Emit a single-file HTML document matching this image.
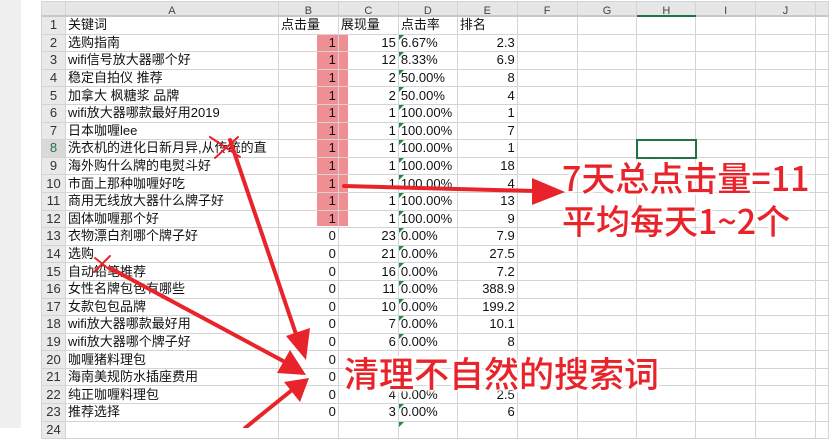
<!DOCTYPE html>
<html><head><meta charset="utf-8">
<style>
body{margin:0;width:829px;height:428px;overflow:hidden;background:#fff;font-family:"Liberation Sans","Noto Sans CJK SC",sans-serif;position:relative}
#lm{position:absolute;left:0;top:0;width:21px;height:428px;background:#f0f0f0}
#tb{position:absolute;left:41px;top:1px;border-collapse:collapse;table-layout:fixed;font-size:13px;color:#111}
#tb td{border:1px solid #d4d4d4;height:16.6px;padding:0 2px;white-space:nowrap;overflow:hidden;line-height:16px}
#tb tr.h td{background:#e6e6e6;color:#444;text-align:center;height:13px;font-size:11px;line-height:8px;vertical-align:bottom;border-bottom:2px solid #c8c8c8}
#tb td.n{background:#e9e9e9;text-align:center;color:#333;font-size:13px}
#tb td.r{text-align:right}
#tb td.d{position:relative}
#tb td.d:before{content:"";position:absolute;left:0;top:0;border-top:5px solid #1e8a3c;border-right:5px solid transparent}
.pk{position:absolute;left:317px;top:34px;width:31px;height:192px;background:#f08f93}
.ov{position:absolute;color:#e8232a;font-family:"Noto Sans CJK SC",sans-serif;font-weight:500;text-shadow:0 0 2px #fff,0 0 2px #fff,2px 2px 2px #fff,-2px -2px 2px #fff,2px -2px 2px #fff,-2px 2px 2px #fff;white-space:nowrap}
#sel{position:absolute;left:636px;top:139px;width:57px;height:16px;border:2px solid #217346}
</style></head><body>
<div id="lm"></div>
<div class="pk"></div>
<table id="tb">
<colgroup><col style="width:24px"><col style="width:213px"><col style="width:60px"><col style="width:60px"><col style="width:59px"><col style="width:60px"><col style="width:60px"><col style="width:60px"><col style="width:59px"><col style="width:60px"><col style="width:60px"><col style="width:13px"></colgroup>
<tr class="h"><td></td><td>A</td><td>B</td><td>C</td><td>D</td><td>E</td><td>F</td><td>G</td><td style="border-bottom:2px solid #217346">H</td><td>I</td><td>J</td><td></td></tr>
<tr><td class="n">1</td><td>关键词</td><td>点击量</td><td>展现量</td><td>点击率</td><td>排名</td><td></td><td></td><td></td><td></td><td></td><td></td></tr>
<tr><td class="n">2</td><td>选购指南</td><td class="r">1</td><td class="r">15</td><td class="d">6.67%</td><td class="r">2.3</td><td></td><td></td><td></td><td></td><td></td><td></td></tr>
<tr><td class="n">3</td><td>wifi信号放大器哪个好</td><td class="r">1</td><td class="r">12</td><td class="d">8.33%</td><td class="r">6.9</td><td></td><td></td><td></td><td></td><td></td><td></td></tr>
<tr><td class="n">4</td><td>稳定自拍仪 推荐</td><td class="r">1</td><td class="r">2</td><td class="d">50.00%</td><td class="r">8</td><td></td><td></td><td></td><td></td><td></td><td></td></tr>
<tr><td class="n">5</td><td>加拿大 枫糖浆 品牌</td><td class="r">1</td><td class="r">2</td><td class="d">50.00%</td><td class="r">4</td><td></td><td></td><td></td><td></td><td></td><td></td></tr>
<tr><td class="n">6</td><td>wifi放大器哪款最好用2019</td><td class="r">1</td><td class="r">1</td><td class="d">100.00%</td><td class="r">1</td><td></td><td></td><td></td><td></td><td></td><td></td></tr>
<tr><td class="n">7</td><td>日本咖喱lee</td><td class="r">1</td><td class="r">1</td><td class="d">100.00%</td><td class="r">7</td><td></td><td></td><td></td><td></td><td></td><td></td></tr>
<tr><td class="n" style="color:#217346;background:#d9d9d9">8</td><td>洗衣机的进化日新月异,从传统的直</td><td class="r">1</td><td class="r">1</td><td class="d">100.00%</td><td class="r">1</td><td></td><td></td><td></td><td></td><td></td><td></td></tr>
<tr><td class="n">9</td><td>海外购什么牌的电熨斗好</td><td class="r">1</td><td class="r">1</td><td class="d">100.00%</td><td class="r">18</td><td></td><td></td><td></td><td></td><td></td><td></td></tr>
<tr><td class="n">10</td><td>市面上那种咖喱好吃</td><td class="r">1</td><td class="r">1</td><td class="d">100.00%</td><td class="r">4</td><td></td><td></td><td></td><td></td><td></td><td></td></tr>
<tr><td class="n">11</td><td>商用无线放大器什么牌子好</td><td class="r">1</td><td class="r">1</td><td class="d">100.00%</td><td class="r">13</td><td></td><td></td><td></td><td></td><td></td><td></td></tr>
<tr><td class="n">12</td><td>固体咖喱那个好</td><td class="r">1</td><td class="r">1</td><td class="d">100.00%</td><td class="r">9</td><td></td><td></td><td></td><td></td><td></td><td></td></tr>
<tr><td class="n">13</td><td>衣物漂白剂哪个牌子好</td><td class="r">0</td><td class="r">23</td><td class="d">0.00%</td><td class="r">7.9</td><td></td><td></td><td></td><td></td><td></td><td></td></tr>
<tr><td class="n">14</td><td>选购</td><td class="r">0</td><td class="r">21</td><td class="d">0.00%</td><td class="r">27.5</td><td></td><td></td><td></td><td></td><td></td><td></td></tr>
<tr><td class="n">15</td><td>自动铅笔推荐</td><td class="r">0</td><td class="r">16</td><td class="d">0.00%</td><td class="r">7.2</td><td></td><td></td><td></td><td></td><td></td><td></td></tr>
<tr><td class="n">16</td><td>女性名牌包包有哪些</td><td class="r">0</td><td class="r">11</td><td class="d">0.00%</td><td class="r">388.9</td><td></td><td></td><td></td><td></td><td></td><td></td></tr>
<tr><td class="n">17</td><td>女款包包品牌</td><td class="r">0</td><td class="r">10</td><td class="d">0.00%</td><td class="r">199.2</td><td></td><td></td><td></td><td></td><td></td><td></td></tr>
<tr><td class="n">18</td><td>wifi放大器哪款最好用</td><td class="r">0</td><td class="r">7</td><td class="d">0.00%</td><td class="r">10.1</td><td></td><td></td><td></td><td></td><td></td><td></td></tr>
<tr><td class="n">19</td><td>wifi放大器哪个牌子好</td><td class="r">0</td><td class="r">6</td><td class="d">0.00%</td><td class="r">8</td><td></td><td></td><td></td><td></td><td></td><td></td></tr>
<tr><td class="n">20</td><td>咖喱猪料理包</td><td class="r">0</td><td class="r"></td><td></td><td class="r"></td><td></td><td></td><td></td><td></td><td></td><td></td></tr>
<tr><td class="n">21</td><td>海南美规防水插座费用</td><td class="r">0</td><td class="r"></td><td></td><td class="r"></td><td></td><td></td><td></td><td></td><td></td><td></td></tr>
<tr><td class="n">22</td><td>纯正咖喱料理包</td><td class="r">0</td><td class="r">4</td><td class="d">0.00%</td><td class="r">2.5</td><td></td><td></td><td></td><td></td><td></td><td></td></tr>
<tr><td class="n">23</td><td>推荐选择</td><td class="r">0</td><td class="r">3</td><td class="d">0.00%</td><td class="r">6</td><td></td><td></td><td></td><td></td><td></td><td></td></tr>
<tr><td class="n">24</td><td></td><td></td><td></td><td class="d"></td><td></td><td></td><td></td><td></td><td></td><td></td><td></td></tr>
</table>
<div id="sel"></div>
<svg style="position:absolute;left:0;top:0" width="829" height="428">
<g stroke="#e8232a" stroke-width="4" fill="none" stroke-linecap="round">
<path d="M344 186 L535 191"/>
<path d="M230 140 L298 340"/>
<path d="M110 268 L285 362"/>
<path d="M245 428 L292 390"/>
<path d="M210 137 L240 157 M238 137 L215 158" stroke-width="2"/>
<path d="M95 258 L110 270 M110 256 L94 272" stroke-width="2"/>
</g>
<g fill="#e8232a">
<polygon points="565,192 532,178 532,205"/>
<polygon points="306,360 286,336 310,328"/>
<polygon points="306,375 277,373 290,350"/>
<polygon points="309,378 284,382 300,402"/>
</g>
</svg>
<div class="ov" style="left:562px;top:155px;font-size:34px;line-height:44px">7天总点击量=11</div>
<div class="ov" style="left:562px;top:198px;font-size:34px;line-height:44px">平均每天1~2个</div>
<div class="ov" style="left:344px;top:350px;font-size:35px;line-height:46px">清理不自然的搜索词</div>
</body></html>
